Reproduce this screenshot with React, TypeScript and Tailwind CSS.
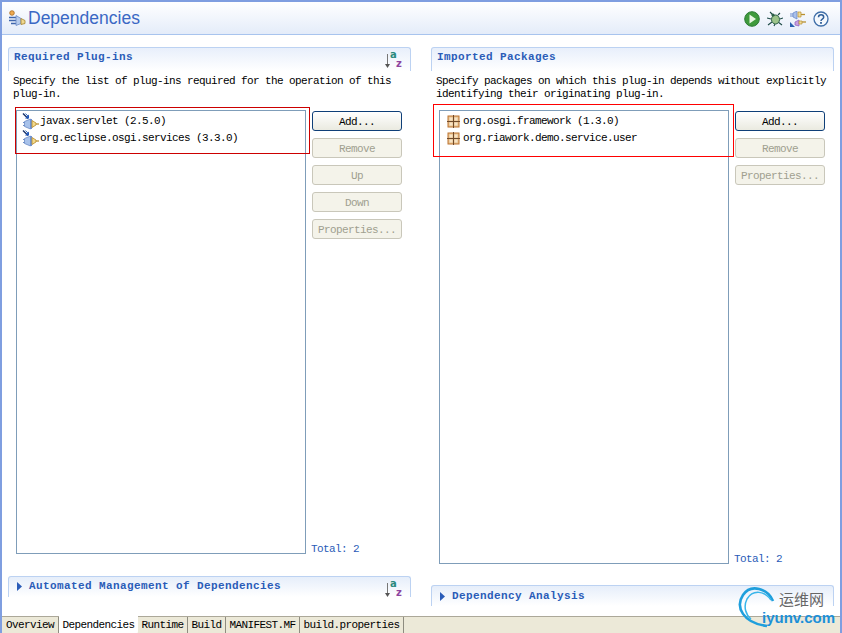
const mono = "font-['Liberation_Mono',monospace] text-[11px] tracking-[-0.6px]";

function SortIcon() {
  return (
    <div className="relative w-[17px] h-[19px] shrink-0">
      <svg width="6" height="17" viewBox="0 0 6 17" className="absolute left-0 top-[2px]">
        <path d="M2.500 2v13" stroke="#777" strokeWidth="1" />
        <path d="M0 12h5l-2.500 4z" fill="#555" />
      </svg>
      <span className="absolute left-[5px] top-0 font-['DejaVu_Sans',sans-serif] font-bold text-[10px] leading-[9px] text-[#2a8a7c]">a</span>
      <span className="absolute left-[11px] top-[9px] font-['DejaVu_Sans',sans-serif] font-bold text-[10px] leading-[9px] text-[#8e44a0]">z</span>
    </div>
  );
}

function PluginIcon() {
  return (
    <svg width="17" height="17" viewBox="0 0 17 17" className="shrink-0 mt-[-1px]">
      <path d="M1 0.500l5 5" stroke="#16306a" strokeWidth="1.400" fill="none" />
      <path d="M3.500 0.500l3 3" stroke="#3c76c8" strokeWidth="1" fill="none" />
      <path d="M3 5.500h4v-4z" fill="#1d55b8" />
      <path d="M1 9.500h2M1 12.500h2" stroke="#6d8dc4" strokeWidth="1" />
      <path d="M2.500 8.500l6-2.500v10l-6-2.500z" fill="#a8c2ea" stroke="#6b8bc6" strokeWidth="0.800" />
      <rect x="8" y="6" width="2" height="10" fill="#6f92d0" />
      <path d="M10 7.500l4 2.500v2l-4 2.500z" fill="#f1d98c" stroke="#b88a28" strokeWidth="0.800" />
      <path d="M14 11h3" stroke="#b88a28" strokeWidth="1.200" />
    </svg>
  );
}

function PackageIcon() {
  return (
    <svg width="13" height="13" viewBox="0 0 13 13" className="shrink-0">
      <rect x="1" y="1" width="11" height="11" fill="#e6c08e" stroke="#bd7430" />
      <rect x="2.500" y="2.500" width="3" height="3" fill="#f7e4c6" />
      <rect x="7.500" y="2.500" width="3" height="3" fill="#f7e4c6" />
      <rect x="2.500" y="7.500" width="3" height="3" fill="#f7e4c6" />
      <rect x="7.500" y="7.500" width="3" height="3" fill="#f7e4c6" />
      <path d="M6.500 0v13M0 6.500h13" stroke="#6f4a2a" strokeWidth="1" />
    </svg>
  );
}

function DependenciesIcon() {
  return (
    <svg width="18" height="17" viewBox="0 0 18 17" className="shrink-0">
      <circle cx="4" cy="3" r="2.300" fill="#efaa50" stroke="#a8691c" strokeWidth="0.800" />
      <path d="M1 7.500h7M1 10.500h7M3 13.500h5" stroke="#3f66ac" strokeWidth="1.300" />
      <path d="M8 5.500l5 3v5l-5 2z" fill="#b6cbec" stroke="#6b8bc6" strokeWidth="0.800" />
      <path d="M13 8.500l4 2v3l-4 1z" fill="#efd890" stroke="#a5832c" strokeWidth="0.800" />
    </svg>
  );
}

function RunIcon() {
  return (
    <svg width="16" height="16" viewBox="0 0 16 16">
      <circle cx="8" cy="8" r="7.300" fill="#3f9a3c" stroke="#2b7a34" />
      <path d="M5.500 3.500v9l6.500-4.500z" fill="#e9f6e4" />
    </svg>
  );
}

function BugIcon() {
  return (
    <svg width="16" height="16" viewBox="0 0 16 16">
      <path d="M3 1l3 3M13 2l-2 2M0 7l4 1M16 7l-3 1M1 14l4-3M15 14l-4-3M7 15l1-2" stroke="#1d4a46" strokeWidth="1.100" fill="none" />
      <ellipse cx="8.500" cy="8.500" rx="4" ry="4.500" fill="#9cc48a" stroke="#2e6048" />
      <circle cx="6" cy="4" r="1.600" fill="#2e6048" />
    </svg>
  );
}

function PluginsToolIcon() {
  return (
    <svg width="16" height="16" viewBox="0 0 16 16">
      <path d="M0 5h3M0 3h3" stroke="#6f8fd0" />
      <path d="M3 2l4-2v8L3 6z" fill="#a9c0ea" stroke="#6283c8" strokeWidth="0.700" />
      <path d="M8 1h3v5H8z" fill="#f0dc98" stroke="#b89030" strokeWidth="0.700" />
      <path d="M11 3.500h4" stroke="#b89030" strokeWidth="1.300" />
      <path d="M5 11l4-2v6l-4-1z" fill="#c79ee0" stroke="#8a5cb8" strokeWidth="0.700" />
      <path d="M9 10h3v3H9z" fill="#f0dc98" stroke="#b89030" strokeWidth="0.700" />
      <path d="M12 11h4" stroke="#b89030" strokeWidth="1.300" />
      <path d="M0 11v5h5z" fill="#2a60b0" />
    </svg>
  );
}

function HelpIcon() {
  return (
    <svg width="16" height="16" viewBox="0 0 16 16">
      <circle cx="8" cy="8" r="7" fill="#f4f8fd" stroke="#3f6ea8" strokeWidth="1.300" />
      <path d="M5.500 6.200c0-3.200 5.200-3.200 5.200 0 0 2-2.700 1.800-2.700 3.700" stroke="#2f5e98" strokeWidth="1.500" fill="none" />
      <rect x="7.100" y="11" width="1.800" height="1.800" fill="#2f5e98" />
    </svg>
  );
}

function Triangle() {
  return (
    <svg width="5" height="9" viewBox="0 0 5 9" className="shrink-0">
      <path d="M0 0l5 4.500L0 9z" fill="#2a5cb8" />
    </svg>
  );
}

function SectionTitle({ text }: { text: string }) {
  return (
    <span className="font-['Liberation_Mono',monospace] text-[11px] leading-[14px] font-bold tracking-[0.4px] text-[#2a5cb8] whitespace-pre">
      {text}
    </span>
  );
}

function EclipseButton({ label, primary }: { label: string; primary?: boolean }) {
  return (
    <div
      className={
        primary
          ? `h-[20px] w-[90px] pt-[2px] flex items-center justify-center rounded-[3px] border border-[#0f3f78] bg-gradient-to-b from-white to-[#eaeae0] text-black ${mono}`
          : `h-[20px] w-[90px] pt-[2px] flex items-center justify-center rounded-[3px] border border-[#c9c7ba] bg-[#f4f3ea] text-[#a09f90] ${mono}`
      }
    >
      {label}
    </div>
  );
}

function SectionPanel({
  title,
  description,
  items,
  buttons,
  listHeight,
  sortable,
  icon,
}: {
  title: string;
  description: string[];
  items: string[];
  buttons: string[];
  listHeight: string;
  sortable?: boolean;
  icon: "plugin" | "package";
}) {
  return (
    <div className="w-[403px] flex flex-col">
      <div className="h-[24px] flex justify-between rounded-t-[3px] border border-b-0 border-[#bcd2f2] bg-gradient-to-b from-[#e8effb] to-white pl-[5px] pr-[8px] pt-[2px]">
        <SectionTitle text={title} />
        {sortable && <SortIcon />}
      </div>
      <div className={`mt-[4px] pl-[5px] leading-[13px] text-black ${mono}`}>
        {description.map((line) => (
          <div key={line} className="whitespace-pre h-[13px]">{line}</div>
        ))}
      </div>
      <div className="mt-[9px] pl-[8px] flex gap-[6px]">
        <div className={`relative w-[290px] ${listHeight} border border-[#7f9db9] bg-white pt-[2px] shrink-0`}>
          {items.map((item) => (
            <div
              key={item}
              className={`h-[17px] flex items-center ${icon === "package" ? "pl-[7px] gap-[3px]" : "pl-[5px] gap-[1px]"} text-black whitespace-pre ${mono}`}
            >
              {icon === "plugin" ? <PluginIcon /> : <PackageIcon />}
              <span>{item}</span>
            </div>
          ))}
        </div>
        <div className="flex flex-col justify-between">
          <div className="pt-[1px] flex flex-col gap-[7px]">
            {buttons.map((b, i) => (
              <EclipseButton key={b} label={b} primary={i === 0} />
            ))}
          </div>
          <div className={`text-[#2a5cb8] leading-[13px] mb-[-2px] ml-[-1px] ${mono}`}>Total: 2</div>
        </div>
      </div>
    </div>
  );
}

function CollapsedSection({ title, sortable, className }: { title: string; sortable?: boolean; className: string }) {
  return (
    <div className={`w-[403px] h-[21px] flex justify-between rounded-t-[3px] border border-b-0 border-[#bcd2f2] bg-gradient-to-b from-[#e6eefa] to-white pl-[8px] pr-[8px] ${className}`}>
      <div className="flex items-center gap-[7px] h-[14px]">
        <Triangle />
        <SectionTitle text={title} />
      </div>
      {sortable && <SortIcon />}
    </div>
  );
}

function Watermark() {
  return (
    <div className="absolute left-[737px] top-[585px] w-[105px] h-[48px]">
      <svg width="50" height="48" viewBox="0 0 50 48" className="absolute left-0 top-0">
        <path d="M36 16C31 4 14-2 6 10C-2 22 6 38 30 41" stroke="#1f9fdc" strokeWidth="2.600" fill="none" />
        <path d="M34 15C28 6 16 4 10 14C6 22 9 30 14 34" stroke="#38b5ea" strokeWidth="1.500" fill="none" />
      </svg>
      <span className="absolute left-[42px] top-[5px] font-['Noto_Sans_CJK_SC',sans-serif] text-[15px] leading-[18px] text-[#666]">运维网</span>
      <span className="absolute left-[25px] top-[24px] font-['Liberation_Sans',sans-serif] font-bold text-[15px] leading-[17px] text-[#1c90d8]">iyunv.com</span>
    </div>
  );
}

const tabs = [
  { label: "Overview", w: "w-[57px]" },
  { label: "Dependencies", w: "w-[79px]", active: true },
  { label: "Runtime", w: "w-[50px]" },
  { label: "Build", w: "w-[38px]" },
  { label: "MANIFEST.MF", w: "w-[74px]" },
  { label: "build.properties", w: "w-[104px]" },
];

export default function App() {
  return (
    <div className="relative w-[842px] h-[633px] overflow-hidden border-x-2 border-t-2 border-[#7f9ee0] bg-white flex flex-col">
      {/* Title bar */}
      <div className="h-[33px] shrink-0 flex items-center justify-between border-b border-[#a8c4ee] bg-gradient-to-b from-white to-[#e4ecf9] pl-[6px] pr-[11px] pt-[1px]">
        <div className="flex items-center gap-[2px]">
          <DependenciesIcon />
          <span className="font-['Liberation_Sans',sans-serif] text-[17.500px] text-[#3a68c4]">Dependencies</span>
        </div>
        <div className="flex items-center gap-[7px] pt-[1px]">
          <RunIcon />
          <BugIcon />
          <PluginsToolIcon />
          <HelpIcon />
        </div>
      </div>

      <div className="flex-1 flex gap-[20px] pl-[6px] pt-[12px]">
        <div className="flex flex-col">
          <SectionPanel
            title="Required Plug-ins"
            description={["Specify the list of plug-ins required for the operation of this", "plug-in."]}
            items={["javax.servlet (2.5.0)", "org.eclipse.osgi.services (3.3.0)"]}
            buttons={["Add...", "Remove", "Up", "Down", "Properties..."]}
            listHeight="h-[444px]"
            sortable
            icon="plugin"
          />
          <CollapsedSection title="Automated Management of Dependencies" sortable className="mt-[22px] pt-[2px]" />
        </div>
        <div className="flex flex-col">
          <SectionPanel
            title="Imported Packages"
            description={["Specify packages on which this plug-in depends without explicitly", "identifying their originating plug-in."]}
            items={["org.osgi.framework (1.3.0)", "org.riawork.demo.service.user"]}
            buttons={["Add...", "Remove", "Properties..."]}
            listHeight="h-[454px]"
            icon="package"
          />
          <CollapsedSection title="Dependency Analysis" className="mt-[21px] pt-[3px]" />
        </div>
      </div>

      {/* Editor tabs */}
      <div className="h-[17px] shrink-0 flex border-t border-[#aca899] bg-[#ece9d8]">
        {tabs.map((t) => (
          <div
            key={t.label}
            className={
              t.active
                ? `${t.w} h-[18px] mt-[-1px] flex items-center justify-center rounded-br-[3px] bg-white text-black ${mono}`
                : `${t.w} flex items-center justify-center border-r border-[#8e8c80] text-black ${mono}`
            }
          >
            {t.label}
          </div>
        ))}
      </div>

      {/* Red annotation boxes */}
      <div className="absolute left-[13px] top-[105px] w-[295px] h-[47px] border border-[#cc0000]" />
      <div className="absolute left-[431px] top-[102px] w-[301px] h-[53px] border border-[#ff0000]" />
      <div className="absolute left-[-2px] top-[-2px] w-0 h-0">
        <Watermark />
      </div>
    </div>
  );
}
